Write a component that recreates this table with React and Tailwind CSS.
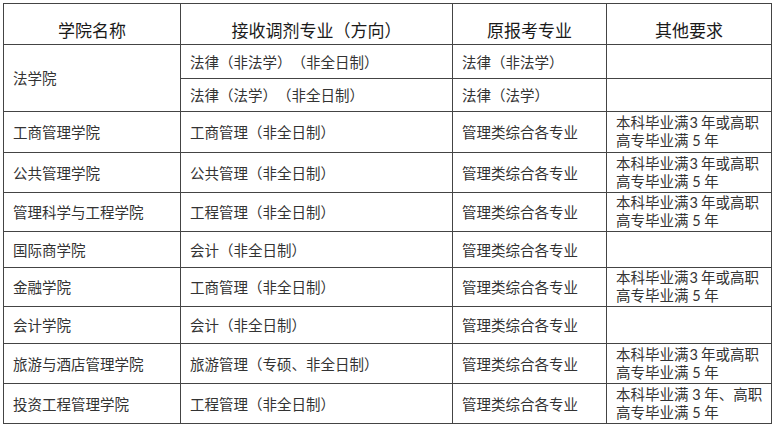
import React from "react";

const cjk = { fontFamily: '"Noto Sans CJK SC", sans-serif' };
const mixed = { fontFamily: '"Lato", "Noto Sans CJK SC", sans-serif' };

function H({ children, cls = "" }) {
  return (
    <div className={"bg-white flex items-end justify-center pb-[5px] text-[17px] leading-[18px] text-[#1a1a1a] [text-spacing-trim:space-all] " + cls}>
      {children}
    </div>
  );
}

function C({ children, cls = "" }) {
  return (
    <div className={"bg-white flex items-center pl-[9px] text-[14.5px] leading-[18px] text-[#333] whitespace-nowrap [text-spacing-trim:space-all] " + cls}>
      {children}
    </div>
  );
}

function Req({ a, b }) {
  return (
    <div className="bg-white flex flex-col justify-center pl-[9px] text-[14.5px] leading-[18px] text-[#333] whitespace-nowrap [text-spacing-trim:space-all]" style={mixed}>
      <div>{a}</div>
      <div>{b}</div>
    </div>
  );
}

const std = [
  <>本科毕业满<span className="ml-[1px] mr-[3px]">3</span>年或高职</>,
  "高专毕业满 5 年",
];

const rows = [
  ["工商管理学院", "工商管理（非全日制）", "管理类综合各专业", std],
  ["公共管理学院", "公共管理（非全日制）", "管理类综合各专业", std],
  ["管理科学与工程学院", "工程管理（非全日制）", "管理类综合各专业", std],
  ["国际商学院", "会计（非全日制）", "管理类综合各专业", null],
  ["金融学院", "工商管理（非全日制）", "管理类综合各专业", std],
  ["会计学院", "会计（非全日制）", "管理类综合各专业", null],
  ["旅游与酒店管理学院", "旅游管理（专硕、非全日制）", "管理类综合各专业", std],
  ["投资工程管理学院", "工程管理（非全日制）", "管理类综合各专业", ["本科毕业满 3 年、高职", "高专毕业满 5 年"]],
];

export default function App() {
  return (
    <div className="w-[774px] h-[428px] bg-white p-[3px]" style={cjk}>
      <div className="grid w-fit bg-[#444] gap-px p-px grid-cols-[176px_271px_153px_164px] grid-rows-[40px_33px_32px_40px_39px_38px_35px_38px_36px_39px_39px]">
        <H>学院名称</H>
        <H>接收调剂专业（方向）</H>
        <H>原报考专业</H>
        <H>其他要求</H>

        <C cls="row-span-2">法学院</C>
        <C>法律（非法学）（非全日制）</C>
        <C>法律（非法学）</C>
        <div className="bg-white" />
        <C>法律（法学）（非全日制）</C>
        <C>法律（法学）</C>
        <div className="bg-white" />

        {rows.map((r, i) => (
          <React.Fragment key={i}>
            <C>{r[0]}</C>
            <C>{r[1]}</C>
            <C>{r[2]}</C>
            {r[3] ? <Req a={r[3][0]} b={r[3][1]} /> : <div className="bg-white" />}
          </React.Fragment>
        ))}
      </div>
    </div>
  );
}
